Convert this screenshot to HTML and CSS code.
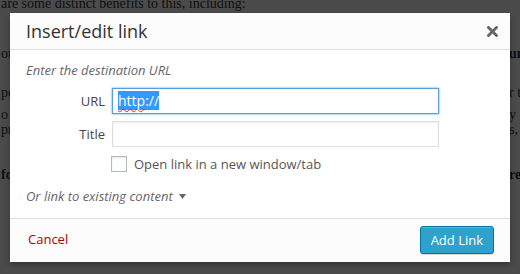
FILE: index.html
```html
<!DOCTYPE html>
<html>
<head>
<meta charset="utf-8">
<link rel="stylesheet" href="styles.css">
</head>
<body>
<div class="page">
  <div class="line l1"><span>are some distinct benefits to this, including:</span></div>
  <div class="line l2"><span>ou</span><span class="rt b">um</span></div>
  <div class="line l3"><span>pe</span><span class="rt">r t</span></div>
  <div class="line l4"><span>o </span><span class="rt">y </span></div>
  <div class="line l5"><span>pr</span><span class="rt">s,</span></div>
  <div class="line l6"><span class="b">fo</span><span class="rt b">re</span></div>
</div>

<div class="dlg">
  <div class="hd">
    <h1 class="title">Insert/edit link</h1>
    <svg class="close" width="11" height="11" viewBox="0 0 11 11"><path d="M1.5 1.5 L9.5 9.5 M9.5 1.5 L1.5 9.5" stroke="#666" stroke-width="2.8" stroke-linecap="square"/></svg>
  </div>
  <div class="bd">
    <p class="hint">Enter the destination URL</p>
    <div class="form">
      <label class="lbl">URL</label>
      <div class="field focus"><span class="sel"><span class="spell">http</span>://</span></div>
      <label class="lbl">Title</label>
      <div class="field"></div>
      <div class="chkrow"><span class="chk"></span><span class="chklbl">Open link in a new window/tab</span></div>
    </div>
    <p class="more">Or link to existing content <svg class="tri" width="7" height="5" viewBox="0 0 7 5"><path d="M0 0 L7 0 L3.5 5 Z" fill="#666"/></svg></p>
  </div>
  <div class="ft">
    <a class="cancel">Cancel</a>
    <button class="btn">Add Link</button>
  </div>
</div>
</body>
</html>
```

FILE: styles.css
```css
html, body {
  margin: 0;
  padding: 0;
  width: 520px;
  height: 274px;
  overflow: hidden;
  background: #4b4b4b;
}
.page {
  font-family: "Liberation Serif", serif;
  font-size: 14px;
  line-height: 20px;
  color: #0e0e0e;
  padding-left: 1px;
}
.line {
  display: flex;
  justify-content: space-between;
  white-space: nowrap;
  height: 20px;
}
.rt {
  width: 11px;
  overflow: visible;
}
.b { font-weight: bold; }
.l1 { margin-top: -6px; }
.l2 { margin-top: 30px; }
.l3 { margin-top: 19px; }
.l4 { margin-top: 2px; }
.l5 { margin-top: -5px; }
.l6 { margin-top: 25px; }

.dlg {
  position: absolute;
  left: 10px;
  top: 13px;
  width: 500px;
  background: #fff;
  box-shadow: 0 3px 6px rgba(0,0,0,0.3);
  font-family: "Open Sans", sans-serif;
  font-size: 13px;
}
.hd {
  height: 36px;
  background: #fcfcfc;
  border-bottom: 1px solid #ddd;
  display: flex;
  align-items: center;
  justify-content: space-between;
  padding: 0 12px 0 16px;
}
.title {
  margin: 0;
  font-size: 18px;
  font-weight: normal;
  line-height: 36px;
  color: #333;
}
.close { display: block; margin-top: 0px; }
.bd {
  height: 168px;
  box-sizing: border-box;
  padding: 11px 16px 0;
}
.hint, .more {
  margin: 0;
  line-height: 18px;
  font-style: italic;
  color: #666;
}
.form {
  margin-top: 9px;
  display: grid;
  grid-template-columns: 79px 327px;
  column-gap: 7px;
  row-gap: 7px;
  align-items: center;
}
.lbl {
  text-align: right;
  color: #444;
  line-height: 18px;
}
.field {
  height: 26px;
  box-sizing: border-box;
  border: 1px solid #ddd;
  box-shadow: inset 0 1px 2px rgba(0,0,0,0.07);
  background: #fff;
  padding: 0 5px;
  font-size: 14px;
  line-height: 24px;
  color: #333;
}
.field.focus {
  border-color: #5b9dd9;
  box-shadow: 0 0 2px rgba(30,140,190,0.8);
}
.sel {
  background: #3399ff;
  color: #fff;
}
.spell {
  text-decoration: underline wavy #e02020;
  text-decoration-skip-ink: none;
  text-underline-offset: 2px;
  text-decoration-thickness: 1px;
}
.chkrow {
  grid-column: 2;
  margin-top: 1px;
  margin-left: -1px;
  display: flex;
  align-items: center;
  gap: 7px;
}
.chk {
  width: 16px;
  height: 16px;
  box-sizing: border-box;
  border: 1px solid #b4b9be;
  background: #fff;
  box-shadow: inset 0 1px 2px rgba(0,0,0,0.1);
}
.chklbl {
  color: #555;
  line-height: 18px;
}
.more {
  margin-top: 14px;
}
.tri {
  margin-left: 3px;
  vertical-align: 2px;
}
.ft {
  height: 44px;
  box-sizing: border-box;
  border-top: 1px solid #ddd;
  background: #fcfcfc;
  padding: 7px 16px 0 18px;
  display: flex;
  justify-content: space-between;
  align-items: flex-start;
}
.cancel {
  color: #a00;
  line-height: 26px;
}
.btn {
  height: 28px;
  box-sizing: border-box;
  padding: 0 10px;
  border: 1px solid #0074a2;
  border-radius: 3px;
  background: #2ea2cc;
  color: #fff;
  font-family: "Open Sans", sans-serif;
  font-size: 13px;
  line-height: 26px;
  box-shadow: inset 0 1px 0 rgba(120,200,230,0.5), 0 1px 0 rgba(0,0,0,0.15);
}
```
